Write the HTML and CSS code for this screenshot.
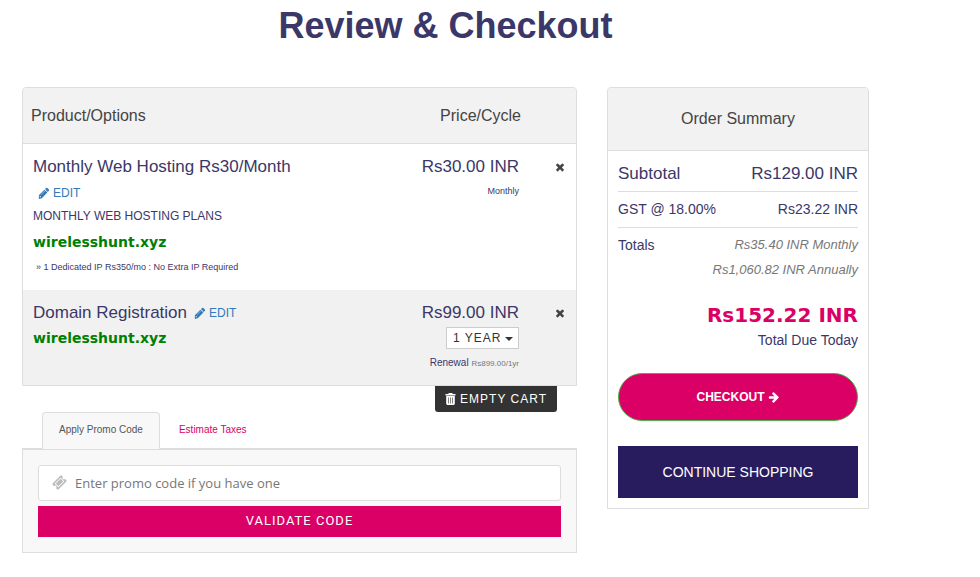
FILE: index.html
```html
<!DOCTYPE html>
<html lang="en">
<head>
<meta charset="utf-8">
<title>Review &amp; Checkout</title>
<meta name="viewport" content="width=device-width, initial-scale=1">
<link rel="stylesheet" href="styles.css">
</head>
<body>
<svg class="sprite" aria-hidden="true">
  <symbol id="pencil" viewBox="0 0 1792 1792"><path d="M380 1536l70-80-140-140-70 80v60h80v80h60zm650-946q0-22-22-22-10 0-17 7l-542 542q-7 7-7 17 0 22 22 22 10 0 17-7l542-542q7-7 7-17zm-70-194l436 436-832 832-436 120 0-556zm703 76q0 53-37 90l-166 166-416-416 166-165q36-38 90-38 53 0 91 38l235 234q37 39 37 91z"/></symbol>
  <symbol id="times" viewBox="0 0 1792 1792"><path d="M1490 1322q0 40-28 68l-136 136q-28 28-68 28t-68-28l-294-294-294 294q-28 28-68 28t-68-28l-136-136q-28-28-28-68t28-68l294-294-294-294q-28-28-28-68t28-68l136-136q28-28 68-28t68 28l294 294 294-294q28-28 68-28t68 28l136 136q28 28 28 68t-28 68l-294 294 294 294q28 28 28 68z"/></symbol>
  <symbol id="arrow" viewBox="0 0 1792 1792"><path d="M1600 960q0 54-37 91l-651 651q-39 37-91 37-51 0-90-37l-75-75q-38-38-38-91t38-91l293-293h-704q-52 0-84.5-37.5t-32.5-90.5v-128q0-53 32.5-90.5t84.5-37.5h704l-293-294q-38-36-38-90t38-90l75-75q38-38 90-38 53 0 91 38l651 651q37 35 37 90z"/></symbol>
  <symbol id="ticket" viewBox="0 0 1792 1792"><path d="M1024 452l316 316-572 572-316-316zm-211 979l618-618q19-19 19-45t-19-45l-362-362q-18-18-45-18t-45 18l-618 618q-19 19-19 45t19 45l362 362q18 18 45 18t45-18zm889-637l-907 908q-37 37-90.5 37t-90.5-37l-126-126q56-56 56-136t-56-136-136-56-136 56l-125-126q-37-37-37-90.5t37-90.5l907-906q37-37 90.5-37t90.5 37l125 125q-56 56-56 136t56 136 136 56 136-56l126 125q37 37 37 90.5t-37 90.5z"/></symbol>
  <symbol id="trash" viewBox="0 0 11 12"><path fill-rule="evenodd" d="M4 0h3l1 1h2.500v1.500h-10V1H3zM1.200 3h8.600V11l-1 1H2.200l-1-1zM3.200 4.500v6h.6v-6zm2 0v6h.6v-6zm2 0v6h.6v-6z"/></symbol>
</svg>
<main class="page">
  <h1 class="title">Review &amp; Checkout</h1>
  <div class="columns">
    <div class="main">
      <div class="cart">
        <table class="items">
          <thead>
            <tr><th class="product" scope="col">Product/Options</th><th class="price" scope="col">Price/Cycle</th><td class="remove"></td></tr>
          </thead>
          <tbody>
            <tr>
              <td class="product">
                <div class="name">Monthly Web Hosting Rs30/Month</div>
                <div class="edit-row"><a class="edit" href="#"><svg class="icon"><use href="#pencil"/></svg>EDIT</a></div>
                <div class="group">MONTHLY WEB HOSTING PLANS</div>
                <div class="domain domain-tall">wirelesshunt.xyz</div>
                <div class="option">» 1 Dedicated IP Rs350/mo : No Extra IP Required</div>
              </td>
              <td class="price">
                <div class="name">Rs30.00 INR</div>
                <div class="cycle">Monthly</div>
              </td>
              <td class="remove"><button class="remove-btn" type="button" aria-label="Remove"><svg class="icon"><use href="#times"/></svg></button></td>
            </tr>
            <tr>
              <td class="product">
                <div class="name name-inline">Domain Registration <a class="edit" href="#"><svg class="icon"><use href="#pencil"/></svg>EDIT</a></div>
                <div class="domain">wirelesshunt.xyz</div>
              </td>
              <td class="price">
                <div class="name">Rs99.00 INR</div>
                <div class="term">
                  <select class="term-select" aria-label="Registration period"><option>1 YEAR</option></select>
                  <svg class="caret" viewBox="0 0 8 4"><path d="M0 0h8L4 4z"/></svg>
                </div>
                <div class="renewal">Renewal <span class="renewal-price">Rs899.00/1yr</span></div>
              </td>
              <td class="remove"><button class="remove-btn" type="button" aria-label="Remove"><svg class="icon"><use href="#times"/></svg></button></td>
            </tr>
          </tbody>
        </table>
      </div>
      <div class="empty">
        <button class="empty-btn" type="button"><svg class="trash"><use href="#trash"/></svg>EMPTY CART</button>
      </div>
      <nav class="tabs">
        <a class="tab tab-active" href="#promo">Apply Promo Code</a>
        <a class="tab" href="#taxes">Estimate Taxes</a>
      </nav>
      <form class="promo" id="promo">
        <label class="field">
          <svg class="ticket"><use href="#ticket"/></svg>
          <input class="field-input" type="text" aria-label="Promo code" placeholder="Enter promo code if you have one">
        </label>
        <button class="validate" type="button">VALIDATE CODE</button>
      </form>
    </div>
    <aside class="summary">
      <h2 class="summary-title">Order Summary</h2>
      <div class="summary-body">
        <div class="line line-subtotal"><span>Subtotal</span><span>Rs129.00 INR</span></div>
        <div class="line line-tax"><span>GST @ 18.00%</span><span>Rs23.22 INR</span></div>
        <div class="totals">
          <span class="totals-label">Totals</span>
          <div class="recurring"><div>Rs35.40 INR Monthly</div><div>Rs1,060.82 INR Annually</div></div>
        </div>
        <div class="due">Rs152.22 INR</div>
        <div class="due-label">Total Due Today</div>
        <button class="checkout" type="button">CHECKOUT<svg class="icon"><use href="#arrow"/></svg></button>
        <a class="continue" href="#">CONTINUE SHOPPING</a>
      </div>
    </aside>
  </div>
</main>
</body>
</html>
```
FILE: styles.css
```css
* { box-sizing: border-box; }
body {
  margin: 0;
  background: #fff;
  color: #3b3768;
  font: 14px/20px "Liberation Sans", Arial, sans-serif;
}
button, input, select { font: inherit; margin: 0; }
a { text-decoration: none; }
.sprite { display: none; }
.icon { width: 12px; height: 12px; fill: currentColor; }

.page { padding: 6px 111px 24px 22px; }
.title {
  margin: 0 0 41px;
  font-size: 36px;
  line-height: 40px;
  text-align: center;
}
.columns {
  display: grid;
  grid-template-columns: 555fr 262fr;
  gap: 30px;
  align-items: start;
}

.cart {
  border: 1px solid #ddd;
  border-radius: 4px 4px 0 0;
  overflow: hidden;
}
.items { width: 100%; border-collapse: collapse; }
.items thead { background: #f2f2f2; color: #444; }
.items thead tr { height: 55px; border-bottom: 1px solid #ddd; }
.items th { font-size: 16px; font-weight: 400; padding: 2px 0 0; }
.items tbody td { vertical-align: top; padding-top: 11px; padding-bottom: 16px; }
.items tbody tr:nth-child(even) { background: #f1f1f1; }
.items .product { text-align: left; padding-left: 10px; }
.items th.product { padding-left: 8px; }
.items .price { width: 120px; text-align: right; padding-right: 2px; }
.items th.price { padding-right: 0; }
.items .remove { width: 55px; text-align: right; padding-right: 10px; }
.name { font-size: 17px; line-height: 24px; }
.name-inline { display: flex; align-items: center; gap: 7px; }
.edit {
  display: inline-flex;
  align-items: center;
  gap: 3px;
  color: #337ab7;
  font-size: 12px;
}
.edit-row { padding: 4px 0 4px 5px; line-height: 20px; display: flex; }
.group { font-size: 12px; line-height: 18px; }
.domain {
  color: #008000;
  font-family: "Arial Black", "DejaVu Sans", sans-serif;
  font-size: 14px;
  font-weight: 700;
  line-height: 26px;
}
.domain-tall { line-height: 34px; }
.option { font-size: 9px; line-height: 16px; padding-left: 3px; }
.items tbody tr:first-child td { padding-bottom: 15px; }
.cycle { font-size: 9px; line-height: 24px; }
.remove-btn {
  display: inline-flex;
  align-items: center;
  height: 24px;
  padding: 0;
  border: 0;
  background: none;
  color: #444;
}
.term { position: relative; display: block; width: 73px; margin: 2px 0 0 auto; }
.term-select {
  display: block;
  appearance: none;
  width: 100%;
  height: 22px;
  padding: 0 6px;
  border: 1px solid #ccc;
  border-radius: 0;
  background: #fff;
  color: #333;
  font-size: 12px;
  letter-spacing: 1px;
}
.caret { position: absolute; right: 6px; top: 10px; width: 8px; height: 4px; fill: #333; pointer-events: none; }
.renewal { font-size: 10px; line-height: 20px; padding-top: 4px; margin-bottom: -5px; }
.renewal-price { font-size: 8px; color: #777; }

.empty { display: flex; justify-content: flex-end; padding-right: 20px; }
.empty-btn {
  display: flex;
  align-items: center;
  gap: 4px;
  height: 26px;
  padding: 0 10px;
  border: 0;
  border-radius: 0 0 3px 3px;
  background: #333;
  color: #fff;
  font-size: 12px;
  letter-spacing: 1px;
}
.trash { width: 11px; height: 12px; fill: #fff; }

.tabs {
  display: flex;
  padding: 0 20px;
  border-bottom: 1px solid #ddd;
}
.tab {
  padding: 7px 16px 8px;
  border: 1px solid transparent;
  color: #db0066;
  font-size: 10px;
  margin-bottom: -1px;
  margin-right: 2px;
}
.tab-active {
  border-color: #ddd;
  border-bottom-color: #f8f8f8;
  border-radius: 4px 4px 0 0;
  background: #f8f8f8;
  color: #555;
}
.promo {
  padding: 15px;
  border: 1px solid #ddd;
  background: #f8f8f8;
}
.field {
  display: flex;
  align-items: center;
  gap: 8px;
  height: 36px;
  padding: 0 13px;
  border: 1px solid #ddd;
  border-radius: 3px;
  background: #fff;
}
.ticket { flex: none; width: 15px; height: 15px; fill: #bbb; }
.field-input {
  flex: 1;
  min-width: 0;
  padding: 0;
  border: 0;
  outline: 0;
  background: none;
  color: #444;
  font: 13px/20px "Open Sans", sans-serif;
}
.field-input::placeholder { color: #777; opacity: 1; }
.validate {
  display: block;
  width: 100%;
  height: 31px;
  margin-top: 5px;
  border: 0;
  background: #db0066;
  color: #fff;
  font: 13px/20px Roboto, sans-serif;
  letter-spacing: 1px;
}

.summary {
  border: 1px solid #ddd;
  border-radius: 4px 4px 0 0;
  overflow: hidden;
}
.summary-title {
  margin: 0;
  padding: 21px 0;
  border-bottom: 1px solid #ddd;
  background: #f2f2f2;
  color: #444;
  font-size: 16px;
  font-weight: 400;
  line-height: 20px;
  text-align: center;
}
.summary-body { padding: 0 10px 10px; }
.line {
  display: flex;
  justify-content: space-between;
  padding: 7px 0 8px;
  border-bottom: 1px solid #ddd;
}
.line-subtotal { padding: 13px 0 7px; font-size: 17px; }
.totals { display: flex; justify-content: space-between; padding-top: 4px; }
.totals-label { padding-top: 3px; }
.recurring {
  color: #777;
  font-size: 13px;
  font-style: italic;
  line-height: 25px;
  text-align: right;
}
.due {
  margin-top: 18px;
  color: #db0066;
  font-family: "Arial Black", "DejaVu Sans", sans-serif;
  font-size: 20px;
  font-weight: 700;
  line-height: 30px;
  text-align: right;
}
.due-label { text-align: right; }
.checkout {
  display: flex;
  align-items: center;
  justify-content: center;
  gap: 3px;
  width: 100%;
  height: 48px;
  margin: 23px 0 25px;
  padding: 0;
  border: 1px solid #4cae4c;
  border-radius: 24px;
  background: #db0066;
  color: #fff;
  font-size: 12px;
  font-weight: 700;
}
.continue {
  display: block;
  padding: 16px 0;
  background: #281c5f;
  color: #fff;
  text-align: center;
}
```
